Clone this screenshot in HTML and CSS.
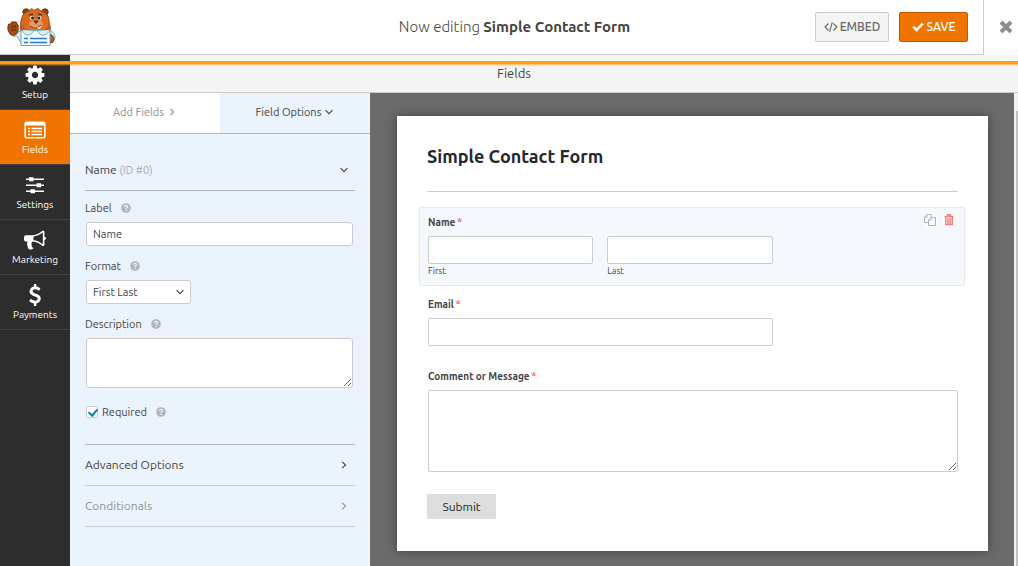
FILE: index.html
```html
<!DOCTYPE html>
<html lang="en">
<head>
    <meta charset="utf-8">
    <meta name="viewport" content="width=device-width, initial-scale=1.0">
    <title>Simple Contact Form</title>
    <link rel="stylesheet" href="styles.css">
</head>
<body>
    <svg class="sprite" width="0" height="0">
        <symbol id="help" viewBox="0 0 10 10">
            <circle cx="5" cy="5" r="4.8" fill="#b0b6bd"/>
            <path d="M3.4 3.9C3.6 2 6.6 2 6.6 3.8C6.6 4.8 5.1 4.8 5.1 5.9M5.1 6.8V8.1" fill="none" stroke="#ebf3fc" stroke-width="1.3"/>
        </symbol>
        <symbol id="down" viewBox="0 0 10 10">
            <path d="M1.5 3.2L5 6.7L8.5 3.2" fill="none" stroke="currentColor" stroke-width="1.1"/>
        </symbol>
        <symbol id="right" viewBox="0 0 10 10">
            <path d="M3.2 1.8L6.6 5L3.2 8.2" fill="none" stroke="currentColor" stroke-width="1.1"/>
        </symbol>
    </svg>

    <div class="loading-bar"></div>

    <header class="toolbar">
        <div class="toolbar-main">
            <svg class="logo" viewBox="0 0 62 54" width="62" height="54">
                <path d="M17 36Q11 38 11 32L17 30Q20 33 23 29L48 29Q55 32 55 38Q54 43 49 44L21 43Z" fill="#d7eef5" stroke="#83aeba"/>
                <path d="M50 34Q56 37 53 42L50 43Z" fill="#b85a19" stroke="#7c3c14"/>
                <path d="M10 34Q7 30 8 26Q8 23 11 24Q11 21 14 22Q17 21 17 24Q19 24 18 28Q19 33 15 35Q12 36 10 34Z" fill="#a84e14" stroke="#6d3411"/>
                <path d="M12 25V28M15 25V28M11 30H16" stroke="#6d3411" stroke-width="1.5"/>
                <circle cx="26" cy="12" r="3.2" fill="#8c4014" stroke="#6d3411"/>
                <circle cx="45" cy="12" r="3.2" fill="#8c4014" stroke="#6d3411"/>
                <path d="M21 31Q20 27 21 21Q22 13 29 11L32 8.5L34 10.5L38 8.5L41 11Q49 13 49 21Q51 28 50 31Z" fill="#d96a20" stroke="#9b4815"/>
                <path d="M22 24Q27 34 35 33Q44 34 49 24L50 31H21Z" fill="#c05a1a"/>
                <ellipse cx="36" cy="24.5" rx="7" ry="5" fill="#e9985a"/>
                <path d="M29 15L33 14M38 14L42 15" stroke="#66300d" stroke-width="1.5"/>
                <circle cx="32" cy="18" r="2" fill="#fff"/>
                <circle cx="39.5" cy="18" r="2" fill="#fff"/>
                <circle cx="32.5" cy="18" r="1.5" fill="#17233b"/>
                <circle cx="39" cy="18" r="1.5" fill="#17233b"/>
                <path d="M33 20.5H39L36 24Z" fill="#5b2a0d"/>
                <path d="M30 26Q36 31 41 25" fill="none" stroke="#9b4815" stroke-width="1.2"/>
                <path d="M37 28L41 26L40 29Z" fill="#fff"/>
                <path d="M21 30.5H50V45.5H21Z" fill="#f1fafd" stroke="#7ba7b5"/>
                <path d="M22 30Q24 36 30 35L34 31M50 30Q47 36 41 35L37 31" fill="#d7eef5" stroke="#83aeba"/>
                <path d="M24 38.5H28M24 42.5H28M30 38.5H47M30 42.5H47" stroke="#2f7dc4" stroke-width="1.6"/>
            </svg>
            <div class="toolbar-title">Now editing <strong>Simple Contact Form</strong></div>
            <button type="button" class="btn btn-embed">
                <svg viewBox="0 0 14 12" width="14" height="12" fill="none" stroke="currentColor" stroke-width="1.1"><path d="M4.5 2.5L1 6L4.5 9.5M9.5 2.5L13 6L9.5 9.5M8.3 1.2L5.7 10.8"/></svg>
                EMBED
            </button>
            <button type="button" class="btn btn-save">
                <svg viewBox="0 0 12 12" width="12" height="12" fill="none" stroke="currentColor" stroke-width="2.6"><path d="M1.3 5.8L4.6 9L10.8 2.6"/></svg>
                SAVE
            </button>
        </div>
        <button type="button" class="btn-close" aria-label="Close">
            <svg viewBox="0 0 14 14" width="14" height="14" fill="none" stroke="currentColor" stroke-width="4"><path d="M2 2L12 12M12 2L2 12"/></svg>
        </button>
    </header>

    <div class="builder">
        <nav class="sidebar">
            <a href="#" class="sidebar-item">
                <svg viewBox="0 0 1792 1792" width="22" height="22" fill="currentColor"><path d="M1152 896q0-106-75-181t-181-75-181 75-75 181 75 181 181 75 181-75 75-181zm512-109v222q0 12-8 23t-20 13l-185 28q-19 54-39 91 35 50 107 138 10 12 10 25t-9 23q-27 37-99 108t-94 71q-12 0-26-9l-138-108q-44 23-91 38-16 136-29 186-7 28-36 28h-222q-14 0-24.5-8.5t-11.5-21.5l-28-184q-49-16-90-37l-141 107q-10 9-25 9-14 0-25-11-126-114-165-168-7-10-7-23 0-12 8-23 15-21 51-66.5t54-70.5q-27-50-41-99l-183-27q-13-2-21-12.5t-8-23.5v-222q0-12 8-23t19-13l186-28q14-46 39-92-40-57-107-138-10-12-10-24 0-10 9-23 26-36 98.5-107.5t94.5-71.5q13 0 26 10l138 107q44-23 91-38 16-136 29-186 7-28 36-28h222q14 0 24.5 8.5t11.5 21.5l28 184q49 16 90 37l142-107q9-9 24-9 13 0 25 10 129 119 165 170 7 8 7 22 0 12-8 23-15 21-51 66.5t-54 70.5q26 50 41 98l183 28q13 2 21 12.5t8 23.5z"/></svg>
                Setup
            </a>
            <a href="#" class="sidebar-item active">
                <svg viewBox="0 0 22 22" width="22" height="22" fill="none" stroke="currentColor">
                    <rect x="1.2" y="3.2" width="19.6" height="15.6" rx="1.5" stroke-width="1.6"/>
                    <path d="M1 5H21" stroke-width="3"/>
                    <path d="M4 9.5H6M4 12.5H6M4 15.5H6M7.5 9.5H18M7.5 12.5H18M7.5 15.5H18" stroke-width="1.4"/>
                </svg>
                Fields
            </a>
            <a href="#" class="sidebar-item">
                <svg viewBox="0 0 22 22" width="22" height="22" fill="currentColor">
                    <path d="M2 4.5H20V6H2ZM2 10.5H20V12H2ZM2 16.5H20V18H2Z"/>
                    <path d="M5 3.3H9.5V7.2H5ZM12.5 9.3H17V13.2H12.5ZM6.5 15.3H11V19.2H6.5Z"/>
                </svg>
                Settings
            </a>
            <a href="#" class="sidebar-item">
                <svg viewBox="0 0 1792 1792" width="22" height="22" fill="currentColor"><path d="M1664 640q53 0 90.5 37.5t37.5 90.5-37.5 90.5-90.5 37.5v384q0 52-38 90t-90 38q-417-347-812-380-58 19-91 66t-31 100.5 40 92.5q-20 33-23 65.5t6 58 33.5 55 48 50 61.5 50.5q-29 58-111.5 83t-168.5 11.5-132-55.5q-7-23-29.5-87.5t-32-94.5-23-89-15-101 3.5-98.5 22-110.5h-122q-66 0-113-47t-47-113v-192q0-66 47-113t113-47h480q435 0 896-384 52 0 90 38t38 90v384zm-128 604v-954q-394 302-768 343v270q377 42 768 341z"/></svg>
                Marketing
            </a>
            <a href="#" class="sidebar-item">
                <svg viewBox="0 0 1792 1792" width="22" height="22" fill="currentColor"><path d="M1362 1185q0 153-99.5 263.5t-258.5 136.5v175q0 14-9 23t-23 9h-135q-13 0-22.5-9.5t-9.5-22.5v-175q-66-9-127.5-31t-101.5-44.5-74-48-46.5-37.5-17.5-18q-17-21-2-41l103-135q7-10 23-12 15-2 24 9l2 2q113 99 243 125 37 8 74 8 81 0 142.5-43t61.5-122q0-28-15-53t-33.5-42-58.5-37.5-66-32-80-32.5q-39-16-61.5-25t-61.5-26.5-62.5-31-56.5-35.5-53.5-42.5-43.5-49-35.5-58-21-66.5-8.5-78q0-138 98-242t255-134v-180q0-13 9.5-22.5t22.5-9.5h135q14 0 23 9t9 23v176q57 6 110.5 23t87 33.5 63.5 37.5 39 29 15 14q17 18 5 38l-81 146q-8 15-23 16-14 3-27-7-3-3-14.5-12t-39-26.5-58.5-32-74.5-26-85.5-11.5q-95 0-155 43t-60 111q0 26 8.5 48t29.5 41.5 39.5 33 56 31 60.5 27 70 27.5q53 20 81 31.5t76 35 75.5 42.5 62 50 53 63.5 31.5 76.5 13 94z"/></svg>
                Payments
            </a>
        </nav>

        <div class="content">
            <h2 class="content-title">Fields</h2>
            <div class="content-body">
                <aside class="panel">
                    <div class="tabs">
                        <a href="#" class="tab">Add Fields <svg width="10" height="10"><use href="#right"/></svg></a>
                        <a href="#" class="tab active">Field Options <svg width="10" height="10"><use href="#down"/></svg></a>
                    </div>
                    <div class="options">
                        <button type="button" class="group group-open">
                            <span>Name <small>(ID #0)</small></span>
                            <svg width="10" height="10"><use href="#down"/></svg>
                        </button>
                        <div class="option">
                            <div class="option-label"><label for="label">Label</label><svg width="10" height="10"><use href="#help"/></svg></div>
                            <input type="text" id="label" value="Name">
                        </div>
                        <div class="option">
                            <div class="option-label"><label for="format">Format</label><svg width="10" height="10"><use href="#help"/></svg></div>
                            <div class="select">
                                <select id="format"><option>First Last</option></select>
                                <svg width="10" height="10"><use href="#down"/></svg>
                            </div>
                        </div>
                        <div class="option">
                            <div class="option-label"><label for="description">Description</label><svg width="10" height="10"><use href="#help"/></svg></div>
                            <textarea id="description"></textarea>
                        </div>
                        <div class="option-check">
                            <input type="checkbox" id="required" checked>
                            <label for="required">Required</label>
                            <svg width="10" height="10"><use href="#help"/></svg>
                        </div>
                        <button type="button" class="group group-first">Advanced Options <svg width="10" height="10"><use href="#right"/></svg></button>
                        <button type="button" class="group disabled">Conditionals <svg width="10" height="10"><use href="#right"/></svg></button>
                    </div>
                </aside>

                <main class="preview">
                    <form class="form">
                        <h1>Simple Contact Form</h1>
                        <div class="field active">
                            <div class="field-actions">
                                <button type="button" aria-label="Duplicate">
                                    <svg viewBox="0 0 14 14" width="14" height="14" fill="#fff" stroke="#b5b5b5"><path d="M4 1.5H8.5V9.5H1.5V4ZM4 1.5V4H1.5"/><path d="M8 4.5H12.5V12.5H5.5V7ZM8 4.5V7H5.5"/></svg>
                                </button>
                                <button type="button" aria-label="Delete">
                                    <svg viewBox="0 0 14 14" width="14" height="14" fill="none" stroke="#f28080"><path d="M2.5 3.5H11.5M5.5 3V1.8H8.5V3" stroke-width="1.4"/><path d="M3.7 4V11.5H10.3V4M5.9 5V11M8.1 5V11" stroke-width="1.5"/></svg>
                                </button>
                            </div>
                            <div class="field-label">Name <span class="star">*</span></div>
                            <div class="field-row">
                                <div class="field-col">
                                    <input type="text" id="first">
                                    <label for="first">First</label>
                                </div>
                                <div class="field-col">
                                    <input type="text" id="last">
                                    <label for="last">Last</label>
                                </div>
                            </div>
                        </div>
                        <div class="field">
                            <label class="field-label" for="email">Email <span class="star">*</span></label>
                            <div class="field-row"><input type="email" id="email"></div>
                        </div>
                        <div class="field">
                            <label class="field-label" for="message">Comment or Message <span class="star">*</span></label>
                            <textarea id="message"></textarea>
                        </div>
                        <button type="button" class="submit">Submit</button>
                    </form>
                </main>
                <div class="scrollbar"><div class="scrollbar-thumb"></div></div>
            </div>
        </div>
    </div>
</body>
</html>
```
FILE: styles.css
```css
* {
    box-sizing: border-box;
    margin: 0;
    padding: 0;
}

body {
    display: flex;
    flex-direction: column;
    height: 100vh;
    overflow: hidden;
    background: #f5f5f5;
    color: #444;
    font-family: Ubuntu, "Noto Sans", sans-serif;
    font-size: 11px;
    line-height: 16px;
}

input, select, textarea, button {
    font: inherit;
    color: inherit;
}

button {
    border: 0;
    background: none;
    cursor: pointer;
}

a {
    color: inherit;
    text-decoration: none;
}

svg {
    flex-shrink: 0;
}

.sprite {
    position: absolute;
}

.loading-bar {
    position: absolute;
    top: 61px;
    left: 0;
    right: 0;
    z-index: 10;
    height: 5px;
    background: linear-gradient(#ff9800, #ffa21a 50%, rgba(255, 175, 60, 0));
}

/* toolbar */
.toolbar {
    display: flex;
    flex-shrink: 0;
    height: 55px;
    background: #fff;
}

.toolbar-main {
    display: flex;
    flex: 1;
    align-items: center;
    padding-right: 15px;
    border-right: 1px solid #ccc;
    border-bottom: 1px solid #ccc;
}

.toolbar-title {
    flex: 1;
    padding-left: 152px;
    text-align: center;
    font-size: 15px;
    font-weight: 300;
    line-height: 20px;
}

.toolbar-title strong {
    font-weight: 700;
}

.btn {
    display: flex;
    align-items: center;
    justify-content: center;
    height: 30px;
    border: 1px solid #ccc;
    border-radius: 2px;
    font-size: 12px;
    font-weight: 500;
}

.btn-embed {
    gap: 2px;
    width: 74px;
    margin-right: 10px;
    background: #f5f5f5;
    color: #666;
}

.btn-save {
    gap: 3px;
    width: 69px;
    border-color: #c65700;
    background: #f07500;
    color: #fff;
}

.btn-close {
    width: 34px;
    padding: 0 0 2px 10px;
    color: #8c8f92;
}

.btn-close svg {
    display: block;
    margin: 0 auto;
}

/* sidebar */
.builder {
    display: flex;
    flex: 1;
    min-height: 0;
}

.sidebar {
    width: 70px;
    flex-shrink: 0;
    background: #2d2d2d;
}

.sidebar-item {
    display: flex;
    flex-direction: column;
    align-items: center;
    gap: 2px;
    height: 55px;
    padding-top: 9px;
    border-bottom: 1px solid #444;
    color: #fff;
    font-size: 10px;
    line-height: 14px;
}

.sidebar-item.active {
    background: #f07500;
}

.content {
    display: flex;
    flex: 1;
    flex-direction: column;
    min-width: 0;
}

.content-title {
    height: 38px;
    padding-right: 60px;
    border-bottom: 1px solid #ccc;
    text-align: center;
    font-size: 13px;
    font-weight: 400;
    line-height: 37px;
}

.content-body {
    display: flex;
    flex: 1;
    min-height: 0;
}

/* options panel */
.panel {
    width: 300px;
    flex-shrink: 0;
    background: #ebf3fc;
}

.tabs {
    display: flex;
    height: 41px;
    border-bottom: 1px solid #b0b6bd;
}

.tab {
    display: flex;
    flex: 1;
    align-items: center;
    justify-content: center;
    gap: 3px;
    padding-bottom: 2px;
    background: #fff;
    color: #8c8f92;
}

.tab.active {
    background: #ebf3fc;
    color: #444;
}

.options {
    padding: 16px 15px 0;
}

.group {
    display: flex;
    align-items: center;
    justify-content: space-between;
    width: 100%;
    height: 41px;
    padding-right: 6px;
    border-bottom: 1px solid #c8cdd4;
    font-size: 12px;
}

.group small {
    color: #999;
    font-size: 11px;
    font-weight: 300;
}

.group-open {
    margin-bottom: 9px;
    border-color: #b0b6bd;
}

.group-first {
    height: 42px;
    border-top: 1px solid #b0b6bd;
}

.group.disabled {
    color: #8c949c;
}

.option {
    margin-bottom: 12px;
}

.option-label {
    display: flex;
    align-items: center;
    gap: 9px;
    height: 16px;
    margin-bottom: 6px;
}

.option input,
.option select,
.option textarea {
    display: block;
    width: 267px;
    height: 24px;
    margin-left: 1px;
    padding: 0 6px;
    border: 1px solid #ccc;
    border-radius: 3px;
    background: #fff;
}

.option textarea {
    height: 50px;
}

.select {
    position: relative;
    width: 106px;
}

.option select {
    width: 105px;
    appearance: none;
}

.select svg {
    position: absolute;
    top: 7px;
    right: 6px;
}

.option-check {
    display: flex;
    align-items: center;
    height: 16px;
    margin: 16px 0 24px 1px;
}

.option-check input {
    width: 12px;
    height: 12px;
    margin-right: 4px;
    border: 1px solid #ccc;
    border-radius: 2px;
    background: #fff;
    appearance: none;
}

.option-check input:checked::after {
    content: "";
    display: block;
    width: 4px;
    height: 7px;
    margin-left: 3px;
    border: solid #0085ba;
    border-width: 0 2px 2px 0;
    transform: rotate(40deg);
}

.option-check label {
    margin-right: 9px;
}

/* preview */
.preview {
    flex: 1;
    min-width: 0;
    padding: 23px 26px 0 27px;
    background: #6b6b6b;
}

.form {
    padding: 29px 30px 32px;
    background: #fff;
    box-shadow: 0 0 10px rgba(0, 0, 0, 0.4);
}

.form h1 {
    height: 47px;
    margin-bottom: 15px;
    border-bottom: 1px solid #ccc;
    color: #23282d;
    font-size: 18px;
    font-weight: 700;
    line-height: 22px;
}

.field {
    position: relative;
    margin: 0 -7px 7px -8px;
    padding: 7px 6px 7px 8px;
    border: 1px solid transparent;
}

.field.active {
    margin-bottom: 3px;
    border-color: #e6ebee;
    background: #f5f9fd;
}

.field-label {
    display: block;
    margin-bottom: 5px;
    font-size: 10px;
    font-weight: 700;
}

.star {
    margin-left: -1px;
    color: #f33;
    font-size: 12px;
    font-weight: 400;
    line-height: 12px;
}

.field-row {
    display: flex;
    gap: 14px;
    width: 65%;
}

.field-col {
    flex: 1;
}

.field-col label {
    display: block;
    font-size: 9px;
    line-height: 14px;
}

.field input,
.field textarea {
    display: block;
    width: 100%;
    height: 28px;
    padding: 0 6px;
    border: 1px solid #ccc;
    border-radius: 2px;
    background: #fff;
}

.field textarea {
    height: 82px;
}

.field-actions {
    position: absolute;
    top: 4px;
    right: 7px;
    display: flex;
    gap: 4px;
}

.field-actions button {
    width: 15px;
    height: 15px;
    border-radius: 50%;
    background: #fff;
}

.field-actions svg {
    display: block;
}

.submit {
    display: block;
    width: 69px;
    height: 25px;
    background: #ddd;
    color: #222;
    font-size: 12px;
}

.form .submit {
    margin-top: 14px;
}

.scrollbar {
    width: 4px;
    padding: 18px 0 0 2px;
    background: #f1f1f1;
}

.scrollbar-thumb {
    height: 100%;
    background: #c1c1c1;
}
```
